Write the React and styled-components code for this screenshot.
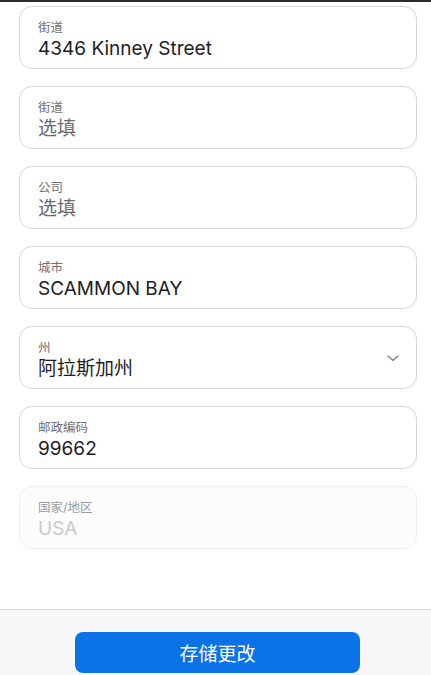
import React from "react";
import styled, { createGlobalStyle } from "styled-components";

// ===== Global =====

const GlobalStyle = createGlobalStyle`
  html, body {
    margin: 0;
    padding: 0;
    background: #ffffff;
  }
  body {
    font-family: Inter, "Noto Sans CJK SC", sans-serif;
    -webkit-font-smoothing: antialiased;
  }
  * {
    box-sizing: border-box;
  }
`;

// ===== Styled Components =====

const Page = styled.div`
  display: flex;
  flex-direction: column;
  height: 100vh;
  overflow: hidden;
`;

const TopEdge = styled.div`
  height: 2px;
  background: #2b2b2b;
  flex-shrink: 0;
`;

const Form = styled.div`
  flex: 1;
  display: flex;
  flex-direction: column;
  gap: 17px;
  padding: 4px 14px 0 19px;
`;

const Field = styled.div`
  display: flex;
  align-items: flex-start;
  height: 63px;
  padding: 12px 18px 0 18px;
  border: 1px solid ${(p) => (p.disabled ? "#efeff1" : "#d6d6d9")};
  border-radius: 13px;
  background: ${(p) => (p.disabled ? "#fcfcfd" : "#ffffff")};
`;

const FieldBody = styled.div`
  flex: 1;
  display: flex;
  flex-direction: column;
`;

const Label = styled.span`
  font-size: 12.5px;
  line-height: 17px;
  color: ${(p) => (p.disabled ? "#9a9a9f" : "#6f6f74")};
`;

const Value = styled.span`
  font-size: 19px;
  line-height: 25px;
  color: ${(p) =>
    p.disabled ? "#c9c9cc" : p.placeholder ? "#6a6a6e" : "#1d1d1f"};
`;

const Chevron = styled.svg`
  width: 14px;
  height: 14px;
  margin-top: 12px;
  margin-right: -2px;
  flex-shrink: 0;
`;

const Footer = styled.div`
  flex-shrink: 0;
  height: 66px;
  border-top: 1px solid #dcdcdf;
  background: #f8f8fa;
  display: flex;
  justify-content: center;
  padding-top: 22px;
  padding-left: 4px;
`;

const SaveButton = styled.button`
  width: 285px;
  height: 41px;
  border: none;
  border-radius: 8px;
  background: #0b72e7;
  color: #ffffff;
  font-family: Inter, "Noto Sans CJK SC", sans-serif;
  font-size: 19px;
  cursor: pointer;
`;

// ===== Data =====

const fields = [
  { label: "街道", value: "4346 Kinney Street" },
  { label: "街道", value: "选填", placeholder: true },
  { label: "公司", value: "选填", placeholder: true },
  { label: "城市", value: "SCAMMON BAY" },
  { label: "州", value: "阿拉斯加州", select: true },
  { label: "邮政编码", value: "99662" },
  { label: "国家/地区", value: "USA", disabled: true },
];

// ===== App =====

const App = () => {
  return (
    <Page>
      <GlobalStyle />
      <TopEdge />
      <Form>
        {fields.map((f, i) => (
          <Field key={i} disabled={f.disabled}>
            <FieldBody>
              <Label disabled={f.disabled}>{f.label}</Label>
              <Value placeholder={f.placeholder} disabled={f.disabled}>
                {f.value}
              </Value>
            </FieldBody>
            {f.select && (
              <Chevron viewBox="0 0 14 14" fill="none">
                <path
                  d="M2 5l5 4.5L12 5"
                  stroke="#808085"
                  strokeWidth="1.4"
                  strokeLinecap="round"
                  strokeLinejoin="round"
                />
              </Chevron>
            )}
          </Field>
        ))}
      </Form>
      <Footer>
        <SaveButton>存储更改</SaveButton>
      </Footer>
    </Page>
  );
};

export default App;
